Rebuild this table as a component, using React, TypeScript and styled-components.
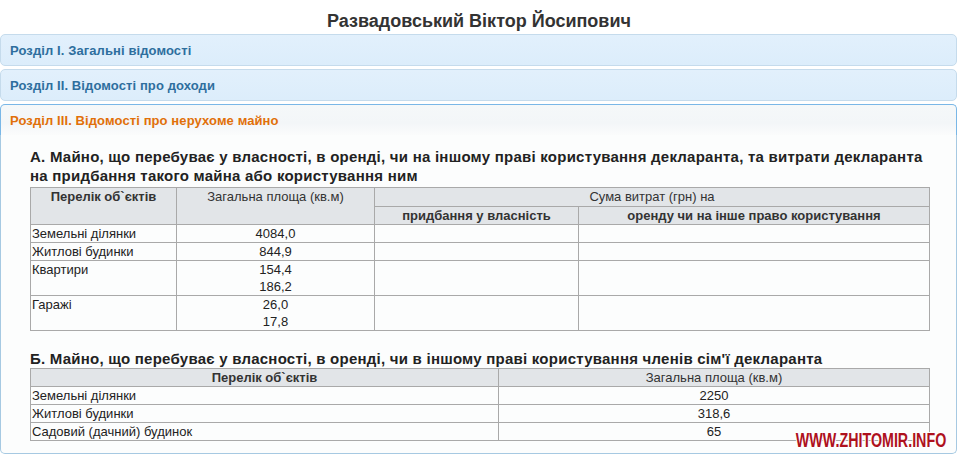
import React from "react";
import styled, { createGlobalStyle } from "styled-components";

const GlobalStyle = createGlobalStyle`
  body {
    margin: 0;
    background: #fff;
    font-family: "Liberation Sans", Arial, sans-serif;
  }
`;

const ownRows = [
  { name: "Земельні ділянки", areas: ["4084,0"] },
  { name: "Житлові будинки", areas: ["844,9"] },
  { name: "Квартири", areas: ["154,4", "186,2"] },
  { name: "Гаражі", areas: ["26,0", "17,8"] },
];

const familyRows = [
  { name: "Земельні ділянки", area: "2250" },
  { name: "Житлові будинки", area: "318,6" },
  { name: "Садовий (дачний) будинок", area: "65" },
];

const App = () => {
  return (
    <Page>
      <GlobalStyle />
      <Title>Развадовський Віктор Йосипович</Title>
      <Header>Розділ I. Загальні відомості</Header>
      <Header>Розділ II. Відомості про доходи</Header>
      <Header active>Розділ III. Відомості про нерухоме майно</Header>
      <Content>
        <SectionTitle>
          А. Майно, що перебуває у власності, в оренді, чи на іншому праві
          користування декларанта, та витрати декларанта на придбання такого
          майна або користування ним
        </SectionTitle>
        <Table>
          <colgroup>
            <col style={{ width: 146 }} />
            <col style={{ width: 198 }} />
            <col style={{ width: 204 }} />
            <col />
          </colgroup>
          <thead>
            <tr>
              <Th rowSpan={2}>Перелік об`єктів</Th>
              <Th rowSpan={2} light>
                Загальна площа (кв.м)
              </Th>
              <Th colSpan={2} light>
                Сума витрат (грн) на
              </Th>
            </tr>
            <tr>
              <Th sub>придбання у власність</Th>
              <Th sub>оренду чи на інше право користування</Th>
            </tr>
          </thead>
          <tbody>
            {ownRows.map((r) => (
              <tr key={r.name}>
                <Td>{r.name}</Td>
                <Td center>
                  {r.areas.map((a) => (
                    <div key={a}>{a}</div>
                  ))}
                </Td>
                <Td />
                <Td />
              </tr>
            ))}
          </tbody>
        </Table>

        <SectionTitle spaced>
          Б. Майно, що перебуває у власності, в оренді, чи в іншому праві
          користування членів сім'ї декларанта
        </SectionTitle>
        <Table>
          <colgroup>
            <col style={{ width: 468 }} />
            <col />
          </colgroup>
          <thead>
            <tr>
              <Th sub>Перелік об`єктів</Th>
              <Th sub light>
                Загальна площа (кв.м)
              </Th>
            </tr>
          </thead>
          <tbody>
            {familyRows.map((r) => (
              <tr key={r.name}>
                <Td>{r.name}</Td>
                <Td center>{r.area}</Td>
              </tr>
            ))}
          </tbody>
        </Table>
        <Watermark>WWW.ZHITOMIR.INFO</Watermark>
      </Content>
    </Page>
  );
};

const Page = styled.div`
  width: 958px;
  height: 458px;
  overflow: hidden;
`;

const Title = styled.h1`
  margin: 0;
  height: 34px;
  padding-top: 11px;
  box-sizing: border-box;
  text-align: center;
  font-size: 18px;
  line-height: 20px;
  font-weight: bold;
  color: #333;
`;

const Header = styled.div<{ active?: boolean }>`
  display: flex;
  align-items: center;
  height: 30px;
  margin: 0 1px 3px 0;
  padding: 0 9px;
  border: 1px solid ${(p) => (p.active ? "#79b7e7" : "#c5dbec")};
  border-radius: ${(p) => (p.active ? "5px 5px 0 0" : "5px")};
  background: ${(p) =>
    p.active
      ? "linear-gradient(#f5f8f9, #f3f6f8 60%, #fbfcfc)"
      : "linear-gradient(#e2f0fc, #dcedfb)"};
  color: ${(p) => (p.active ? "#e17009" : "#2e6e9e")};
  font-size: 13px;
  font-weight: bold;
  letter-spacing: 0.1px;
  ${(p) => p.active && "margin-bottom: 0; border-bottom: 0;"}
`;

const Content = styled.div`
  position: relative;
  margin-right: 1px;
  padding: 12px 26px 12px 29px;
  border: 1px solid #a6c9e2;
  border-top: 0;
  border-radius: 0 0 5px 5px;
  background: #fcfdfd;
`;

const SectionTitle = styled.h3<{ spaced?: boolean }>`
  margin: ${(p) => (p.spaced ? "18px 0 0" : "0 0 2px")};
  font-size: 15px;
  line-height: 19px;
  font-weight: bold;
  letter-spacing: 0.24px;
  color: #222;
`;

const Table = styled.table`
  width: 900px;
  border-collapse: collapse;
  table-layout: fixed;
  font-size: 13px;
  color: #222;
`;

const Th = styled.th<{ light?: boolean; sub?: boolean }>`
  padding: ${(p) => (p.sub ? "1px 2px 0" : "1px 2px")};
  height: 16px;
  border: 1px solid #a9a9a9;
  background: #e2e5e8;
  font-weight: ${(p) => (p.light ? "normal" : "bold")};
  color: #333;
  line-height: 16px;
  vertical-align: top;
  text-align: center;
`;

const Td = styled.td<{ center?: boolean }>`
  padding: 0 1px;
  height: 17px;
  border: 1px solid #a9a9a9;
  line-height: 17px;
  vertical-align: top;
  text-align: ${(p) => (p.center ? "center" : "left")};
`;

const Watermark = styled.div`
  position: absolute;
  right: 10px;
  bottom: 2px;
  font-family: "Liberation Sans", Arial, sans-serif;
  font-weight: bold;
  font-size: 21px;
  line-height: 22px;
  transform: scaleX(0.68);
  transform-origin: right center;
  color: #ae111d;
  text-shadow: 1px 1px 0 #fff, -1px -1px 0 #fff, 1px -1px 0 #fff,
    -1px 1px 0 #fff;
`;

export default App;
